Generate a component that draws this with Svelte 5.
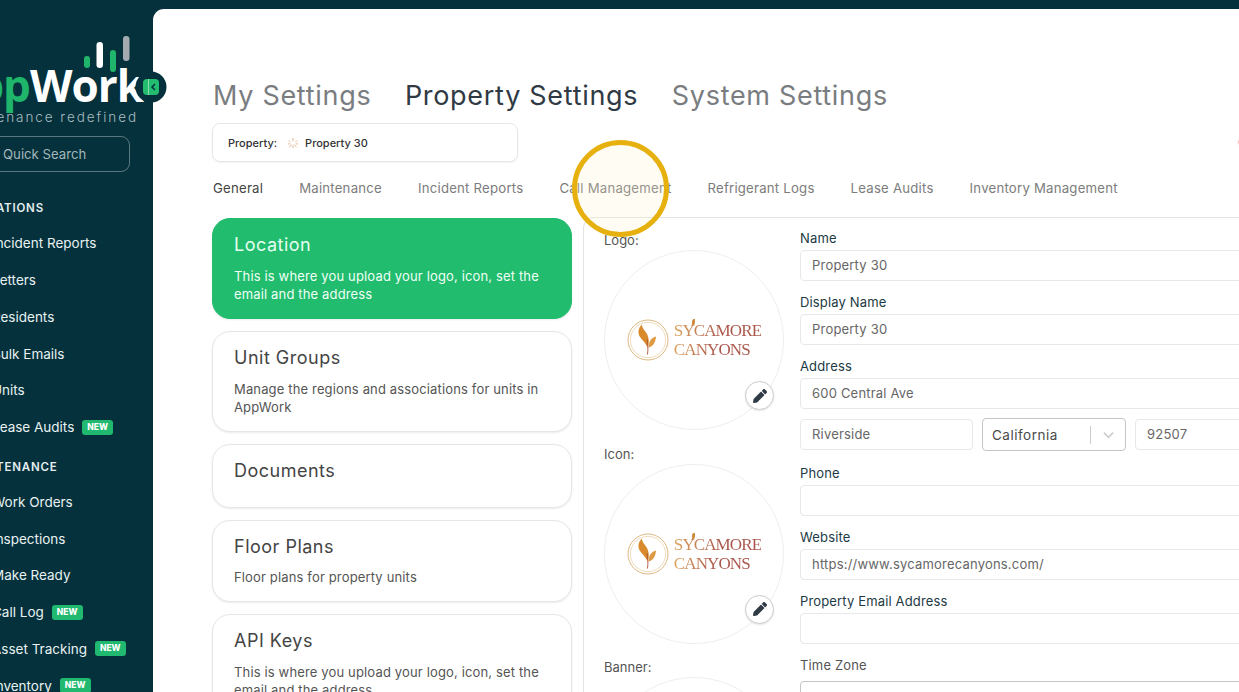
<script>
  const nav = [
    { heading: 'OPERATIONS', items: [
      { label: 'Incident Reports' }, { label: 'Letters' }, { label: 'Residents' },
      { label: 'Bulk Emails' }, { label: 'Units' }, { label: 'Lease Audits', isNew: true }
    ]},
    { heading: 'MAINTENANCE', items: [
      { label: 'Work Orders' }, { label: 'Inspections' }, { label: 'Make Ready' },
      { label: 'Call Log', isNew: true }, { label: 'Asset Tracking', isNew: true }, { label: 'Inventory', isNew: true }
    ]}
  ];
  const tabs = ['General', 'Maintenance', 'Incident Reports', 'Call Management', 'Refrigerant Logs', 'Lease Audits', 'Inventory Management'];
  const cards = [
    { title: 'Location', desc: 'This is where you upload your logo, icon, set the email and the address', active: true },
    { title: 'Unit Groups', desc: 'Manage the regions and associations for units in AppWork' },
    { title: 'Documents', desc: '' },
    { title: 'Floor Plans', desc: 'Floor plans for property units' },
    { title: 'API Keys', desc: 'This is where you upload your logo, icon, set the email and the address' }
  ];
</script>

{#snippet brand()}
  <div class="brand">
    <svg class="seal" viewBox="0 0 42 42" width="42" height="42" aria-hidden="true">
      <circle cx="21" cy="21" r="20" fill="none" stroke="#e0b882" stroke-width="1"/>
      <circle cx="21" cy="21" r="17.6" fill="none" stroke="#e8cba0" stroke-width=".7"/>
      <path d="M15 5.500C11 9 10.500 14 13 18C15 21 19 24 20.500 28.500C22.500 24 22 19 20 15C18 11.500 15 9.500 15 5.500z" fill="#d98a2b"/>
      <path d="M29 17.500C25 18.500 22.500 21 22 25L21.500 28.500C26 27.500 28.500 24 29 17.500z" fill="#df9a44"/>
      <path d="M20 20C21 25 21.200 30 20.500 35.500" fill="none" stroke="#a9503a" stroke-width=".9"/>
    </svg>
    <div class="wordmark">
      <i class="sprout"></i>
      <span>SYCAMORE</span>
      <span>CANYONS</span>
    </div>
  </div>
{/snippet}

{#snippet pencil()}
  <button class="edit" aria-label="Edit">
    <svg viewBox="0 0 512 512" width="14" height="14" aria-hidden="true">
      <path fill="#2f3a44" d="M497.900 142.100l-46.100 46.100c-4.700 4.700-12.300 4.700-17 0l-111-111c-4.700-4.700-4.700-12.300 0-17l46.100-46.100c18.700-18.700 49.100-18.700 67.900 0l60.100 60.100c18.800 18.700 18.800 49.100 0 67.900zM284.200 99.800L21.600 362.400.4 483.900c-2.900 16.400 11.400 30.600 27.800 27.800l121.500-21.300 262.600-262.600c4.700-4.700 4.700-12.300 0-17l-111-111c-4.800-4.700-12.400-4.700-17.100 0z"/>
    </svg>
  </button>
{/snippet}

<div class="app">
  <aside class="sidebar">
    <div class="logo">
      <svg class="bars" viewBox="0 0 46 36" width="46" height="36" aria-hidden="true">
        <rect x="0" y="20" width="6" height="12" rx="3" fill="#1fb66b"/>
        <rect x="12.500" y="6" width="6.500" height="26" rx="3.200" fill="#fff"/>
        <rect x="26" y="14" width="6" height="22" rx="3" fill="#1fb66b"/>
        <rect x="39" y="0" width="6.500" height="25" rx="3" fill="#a3abb0"/>
      </svg>
      <div class="logo-word"><span class="green">App</span>Work</div>
      <div class="tagline">maintenance redefined</div>
    </div>

    <div class="search-wrap"><div class="search">Quick Search</div></div>

    <nav>
      {#each nav as group}
        <div class="section">{group.heading}</div>
        {#each group.items as item}
          <div class="item">
            <span>{item.label}</span>
            {#if item.isNew}<span class="badge">NEW</span>{/if}
          </div>
        {/each}
      {/each}
    </nav>
  </aside>

  <svg class="collapse" viewBox="0 0 32 32" width="32" height="32" aria-hidden="true">
    <circle cx="16" cy="16" r="15.500" fill="#04313c"/>
    <rect x="8" y="8" width="16" height="16" rx="4" fill="#23bd70"/>
    <rect x="13" y="8" width="1" height="16" fill="#8fdcb2"/>
    <path d="M20 13l-3 3 3 3" fill="none" stroke="#04313c" stroke-width="1.500"/>
  </svg>

  <main class="main">
    <div class="titles">
      <h1>My Settings</h1>
      <h1 class="on">Property Settings</h1>
      <h1>System Settings</h1>
    </div>

    <div class="property">
      <span class="prop-label">Property:</span>
      <svg class="prop-icon" viewBox="0 0 14 14" width="12" height="12" aria-hidden="true">
        <path d="M2 4l2 2M7 1v4M12 4l-2 2M1 8h3M13 8h-3M3 12l2-3M11 12L9 9M7 13V9" stroke="#d9a77c" stroke-width=".9" fill="none"/>
      </svg>
      <span class="prop-value">Property 30</span>
    </div>

    <div class="tabs">
      {#each tabs as tab, i}
        <span class="tab" class:current={i === 0}>{tab}</span>
      {/each}
    </div>

    <div class="content">
      <div class="cards">
        {#each cards as card}
          <section class="card" class:active={card.active}>
            <h2>{card.title}</h2>
            <p>{card.desc}</p>
          </section>
        {/each}
      </div>

      <div class="panel">
        <div class="images">
          <div class="img-label">Logo:</div>
          <div class="circle">{@render brand()}{@render pencil()}</div>
          <div class="img-label">Icon:</div>
          <div class="circle">{@render brand()}{@render pencil()}</div>
          <div class="img-label">Banner:</div>
          <div class="circle"></div>
        </div>

        <div class="form">
          <div class="field"><label for="n">Name</label><div id="n" class="input">Property 30</div></div>
          <div class="field"><label for="d">Display Name</label><div id="d" class="input">Property 30</div></div>
          <div class="field tight"><label for="a">Address</label><div id="a" class="input">600 Central Ave</div></div>
          <div class="row">
            <div class="input city">Riverside</div>
            <div class="select state">
              <span class="val">California</span>
              <span class="divider"></span>
              <svg viewBox="0 0 12 8" width="11" height="8" aria-hidden="true"><path d="M1 1.500l5 5 5-5" fill="none" stroke="#ccc" stroke-width="1.800"/></svg>
            </div>
            <div class="input zip">92507</div>
          </div>
          <div class="field"><label for="p">Phone</label><div id="p" class="input"></div></div>
          <div class="field"><label for="w">Website</label><div id="w" class="input">https://www.sycamorecanyons.com/</div></div>
          <div class="field"><label for="e">Property Email Address</label><div id="e" class="input"></div></div>
          <div class="field"><label class="tz" for="t">Time Zone</label><div id="t" class="select tzbox"><span class="faint">Select...</span></div></div>
        </div>
      </div>
    </div>

    <div class="edge-dot"></div>
  </main>

  <div class="spotlight"></div>
</div>

<style>
  :global(body) { margin: 0; overflow: hidden; background: #04313c; }
  * { box-sizing: border-box; }
  .app {
    position: relative; display: flex; width: 100vw; height: 100vh; overflow: hidden;
    background: #04313c; font-family: Inter, "Noto Sans", sans-serif;
  }

  .sidebar { flex: 0 0 153px; width: 153px; color: #eaf2f2; display: flex; flex-direction: column; }
  .logo { position: relative; flex: 0 0 127px; height: 127px; padding-right: 10px; display: flex; flex-direction: column; align-items: flex-end; justify-content: flex-end; white-space: nowrap; }
  .bars { position: absolute; left: 84px; top: 36px; }
  .logo-word { font-size: 44px; line-height: 44px; font-weight: 700; letter-spacing: -1px; color: #fff; font-family: "Open Sans", sans-serif; }
  .green { color: #1fb66b; }
  .tagline { font-size: 13.500px; line-height: 18px; margin: 1px 5px 1px 0; letter-spacing: 1.950px; font-weight: 300; color: #a9bdc0; }
  .search-wrap { flex: 0 0 36px; margin: 9px 0 0 -40px; width: 170px; }
  .search { height: 36px; border: 1px solid rgba(255, 255, 255, .35); border-radius: 9px; padding-left: 42px; line-height: 34px; font-size: 13.200px; color: #a3b7ba; white-space: nowrap; }
  nav { flex: 0 0 auto; margin: 16px 0 0 -32px; white-space: nowrap; }
  .section { height: 34px; line-height: 34px; font-size: 11.500px; font-weight: 600; letter-spacing: .8px; color: #e4eef0; margin: 3px 0 0 -6px; }
  .item + .section { margin-top: 4px; }
  .item { height: 36.750px; display: flex; align-items: center; gap: 8px; padding-left: 24px; font-size: 13.500px; color: #e9f1f1; }
  .badge { background: #20b96f; color: #fff; border-radius: 3px; font-size: 8.500px; font-weight: 800; line-height: 15px; height: 15px; padding: 0 5px; }

  .collapse { position: absolute; left: 135px; top: 71px; z-index: 3; }

  .main { flex: 1; min-width: 0; margin-top: 9px; background: #fff; border-top-left-radius: 11px; padding: 66px 0 0 59px; position: relative; overflow: hidden; }
  .titles { display: flex; gap: 33.500px; height: 40px; align-items: center; margin-left: 1px; }
  h1 { margin: 0; font-size: 27px; font-weight: 400; letter-spacing: .7px; color: #7a7d80; white-space: nowrap; }
  h1.on { color: #303a44; }

  .property { margin-top: 8px; width: 306px; height: 39px; border: 1px solid #e6e6e6; border-radius: 8px; box-shadow: 0 1px 2px rgba(0,0,0,.06); display: flex; align-items: center; padding-left: 15px; gap: 8px; font-size: 11px; font-weight: 500; color: #333; }
  .prop-icon { margin: 0 -2px 0 2px; }

  .tabs { display: flex; gap: 36px; margin: 16px 0 0 1px; height: 20px; line-height: 20px; }
  .tab { font-size: 13.200px; color: #7c7c7c; white-space: nowrap; letter-spacing: .22px; }
  .tab.current { color: #444; }

  .content { display: flex; gap: 11px; margin-top: 19px; align-items: flex-start; }
  .cards { flex: 0 0 360px; display: flex; flex-direction: column; gap: 12px; padding-top: 1px; }
  .card { border: 1px solid #e6e6e6; border-radius: 18px; padding: 13px 21px 14px; box-shadow: 0 1px 2px rgba(0,0,0,.08); background: #fff; }
  .card h2 { margin: 0 0 8.600px; font-size: 18px; line-height: 26px; font-weight: 400; letter-spacing: .5px; color: #444; }
  .card p { margin: 0; font-size: 13px; line-height: 18.750px; letter-spacing: .15px; color: #555; }
  .card.active { background: #21bc6e; border-color: #21bc6e; }
  .card.active h2 { color: #e6fff0; }
  .card.active p { color: #f0fff6; }

  .panel { flex: 1; min-width: 0; display: flex; border: 1px solid #e4e4e4; border-right: 0; border-bottom: 0; border-radius: 11px 0 0 0; padding-left: 20px; min-height: 480px; }
  .images { flex: 0 0 196px; padding-top: 12px; }
  .img-label { height: 20px; line-height: 20px; font-size: 13px; color: #555; }
  .circle { position: relative; width: 180px; height: 180px; border: 1px solid #eee; border-radius: 50%; margin-bottom: 13.500px; display: flex; align-items: center; justify-content: center; }
  .edit { position: absolute; right: 9px; bottom: 19px; width: 29px; height: 29px; padding: 0; border: 1px solid #ccc; border-radius: 50%; background: #fff; display: flex; align-items: center; justify-content: center; box-shadow: 0 1px 2px rgba(0,0,0,.1); }

  .brand { display: flex; align-items: center; gap: 5px; }
  .wordmark { position: relative; display: flex; flex-direction: column; font-family: "Liberation Serif", serif; font-size: 17px; line-height: 19px; letter-spacing: -.9px; }
  .wordmark span { width: max-content; background: linear-gradient(90deg, #dda45c, #a9554a 55%); -webkit-background-clip: text; background-clip: text; color: transparent; }
  .sprout { position: absolute; left: 18px; top: -2px; width: 3px; height: 6px; border-radius: 60% 10%; background: #cf8a3e; }

  .form { flex: 0 0 480px; padding-top: 11px; }
  .field { margin-bottom: 12px; }
  .field.tight { margin-bottom: 9px; }
  label { display: block; height: 18px; line-height: 18px; margin-bottom: 3px; font-size: 13px; letter-spacing: .15px; color: #1d3a44; }
  label.tz { color: #555; margin-bottom: 7px; }
  .input { height: 31px; border: 1px solid #e8e8e8; border-radius: 4px; padding-left: 11px; line-height: 29px; font-size: 13px; letter-spacing: .2px; color: #666; white-space: nowrap; }
  .row { display: flex; gap: 9px; align-items: center; margin-bottom: 13px; height: 33px; }
  .city { flex: 0 0 173px; }
  .zip { flex: 1; }
  .select { border: 1px solid #c4c4c4; border-radius: 4px; display: flex; align-items: center; }
  .state { flex: 0 0 144px; height: 33px; padding-left: 9px; }
  .val { flex: 1; font-size: 13.500px; color: #4a4a4a; letter-spacing: .5px; }
  .divider { width: 1px; height: 18px; background: #ccc; margin-right: 12px; }
  .state svg { margin-right: 11px; }
  .tzbox { height: 38px; padding-left: 11px; }
  .faint { font-size: 13px; color: #e4e4e4; }

  .edge-dot { position: absolute; right: -2px; top: 131px; width: 3px; height: 4px; border-radius: 50%; background: #f7bdb8; box-shadow: 0 0 5px #fad5d0; }

  .spotlight { position: absolute; left: 572px; top: 140px; width: 97px; height: 97px; border: 5px solid #e6b10e; border-radius: 50%; background: rgba(255, 240, 200, .2); z-index: 4; pointer-events: none; }
</style>
